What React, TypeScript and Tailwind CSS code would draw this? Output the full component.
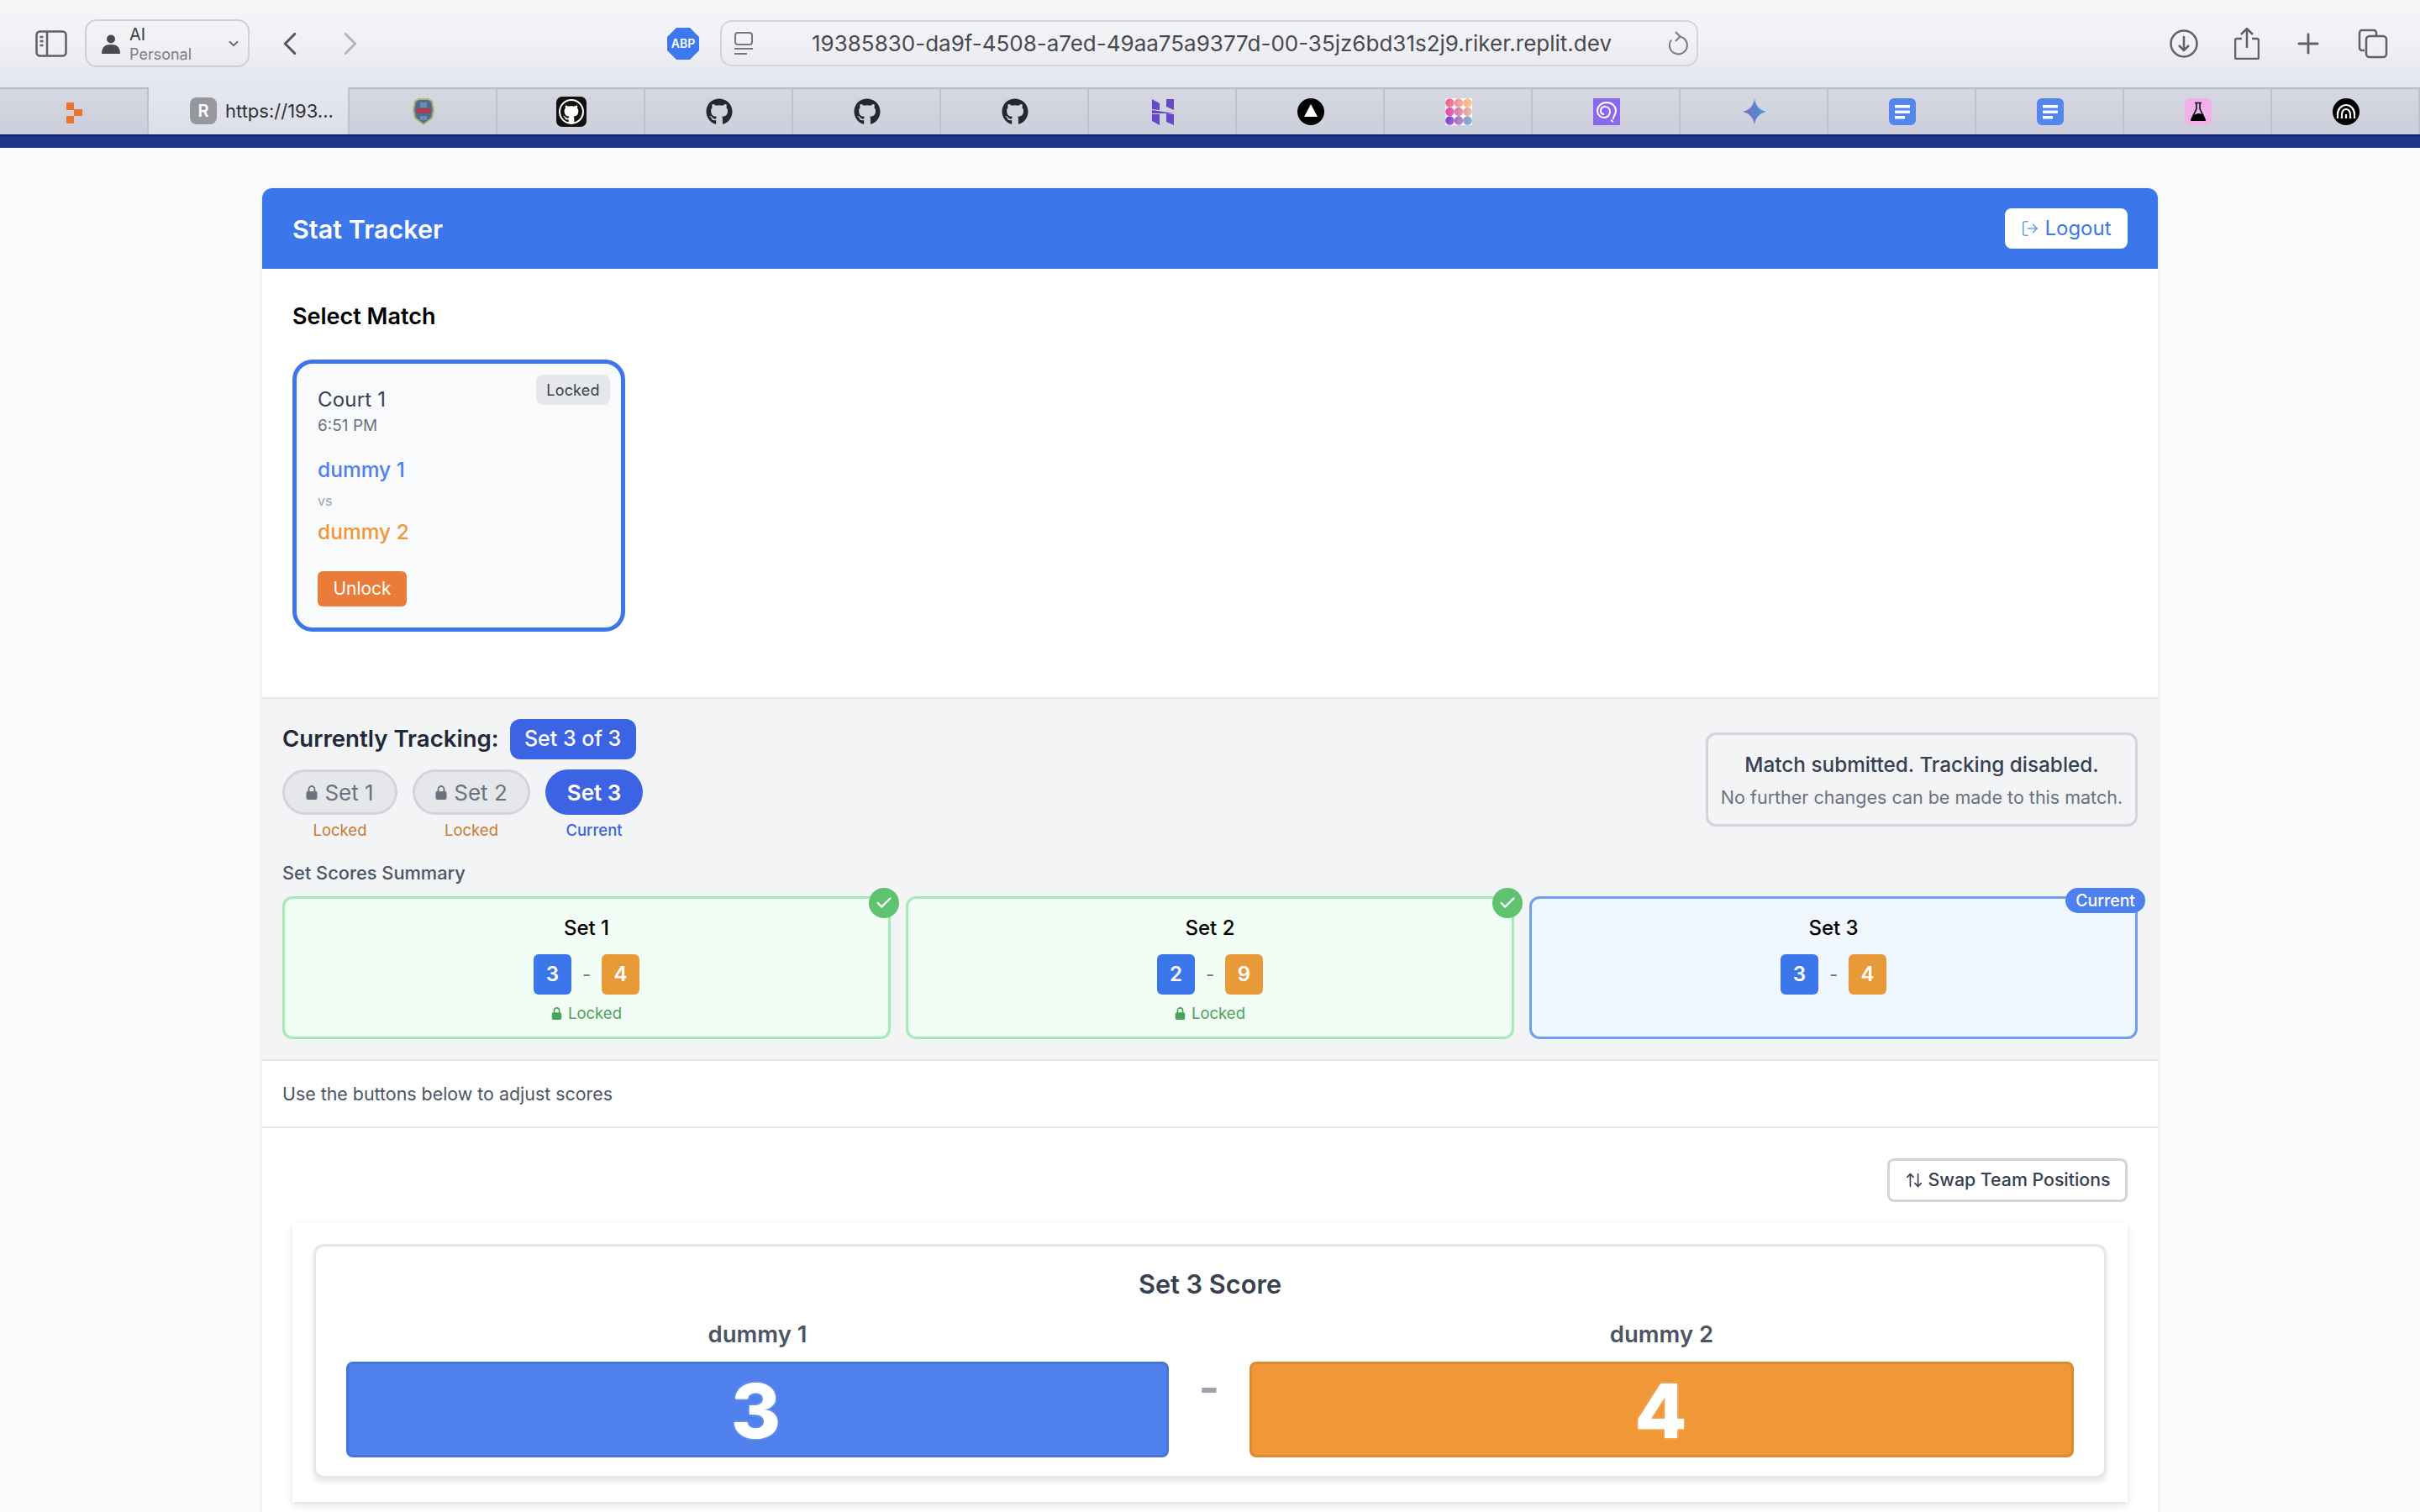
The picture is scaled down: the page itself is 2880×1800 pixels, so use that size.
import React from 'react';
import { FaGithub } from 'react-icons/fa6';
import { VscGithubInverted } from 'react-icons/vsc';
import { LogOut, ArrowUpDown, Check, ChevronDown, ChevronLeft, ChevronRight, Plus } from 'lucide-react';

const font = "font-['Inter','Liberation_Sans',sans-serif]";

const Tab: React.FC<{ children: React.ReactNode }> = ({ children }) => (
  <div className="w-[176px] h-full shrink-0 flex items-center justify-center pl-[2px] border-r-2 border-[#bfc2cd]">{children}</div>
);

const LockIcon: React.FC<{ w: number; h: number; color: string }> = ({ w, h, color }) => (
  <svg width={w} height={h} viewBox="0 0 14 17" className="shrink-0">
    <path d="M3.500 8V4.500a3.500 3.500 0 017 0V8" fill="none" stroke={color} strokeWidth="1.800" />
    <rect x="0.500" y="7" width="13" height="10" rx="2" fill={color} />
  </svg>
);

const ReplitIcon = () => (
  <svg width="32" height="32" viewBox="0 0 32 32">
    <path d="M6 5h9v9H6zM15 13h10v8H15zM6 21h9v9H6z" fill="#ea7530" />
  </svg>
);

const ShieldIcon = () => (
  <svg width="32" height="32" viewBox="0 0 32 32">
    <path d="M5 3l5-3h12l5 3 2 11-2 10-11 8-11-8-2-10z" fill="#b8b36a" />
    <path d="M7 4l4-2h10l4 2 2 10-2 9-9 7-9-7-2-9z" fill="#4b6f96" />
    <path d="M12 5h8v6h-8zM12 21h8v5h-8z" fill="#6f8cab" />
    <rect x="8" y="12" width="16" height="6" fill="#b3394a" />
  </svg>
);

const HostingerIcon = () => (
  <svg width="32" height="32" viewBox="0 0 32 32">
    <path d="M3 1l9 5v8l-9-1zM20 1l9 0v13l-9-4zM3 19h9l0 13-9-5zM20 18l9 1v13l-9-4zM3 14l26 4-26 0z" fill="#6748c8" />
  </svg>
);

const TriangleIcon = () => (
  <svg width="32" height="32" viewBox="0 0 32 32">
    <circle cx="16" cy="16" r="16" fill="#000" />
    <path d="M16 7l8 15H8z" fill="#fff" />
  </svg>
);

const MosaicIcon = () => (
  <svg width="32" height="32" viewBox="0 0 32 32">
    <defs>
      <linearGradient id="mos" gradientUnits="userSpaceOnUse" x1="0" y1="0" x2="32" y2="12">
        <stop offset="0" stopColor="#ee4f8e" />
        <stop offset="0.5" stopColor="#eda5a0" />
        <stop offset="1" stopColor="#f6cf7c" />
      </linearGradient>
      <linearGradient id="mos2" gradientUnits="userSpaceOnUse" x1="0" y1="11" x2="32" y2="21">
        <stop offset="0" stopColor="#e23fb0" />
        <stop offset="0.5" stopColor="#d88cb0" />
        <stop offset="1" stopColor="#ecc7a0" />
      </linearGradient>
      <linearGradient id="mos3" gradientUnits="userSpaceOnUse" x1="0" y1="21" x2="32" y2="32">
        <stop offset="0" stopColor="#6d32d8" />
        <stop offset="0.5" stopColor="#b880c0" />
        <stop offset="1" stopColor="#73bfd0" />
      </linearGradient>
    </defs>
    <rect width="32" height="32" fill="#fff" />
    <g fill="url(#mos)">
      <circle cx="5.500" cy="5.500" r="5.300" />
      <circle cx="16" cy="5.500" r="5.300" />
      <circle cx="26.500" cy="5.500" r="5.300" />
    </g>
    <g fill="url(#mos2)">
      <circle cx="5.500" cy="16" r="5.300" />
      <circle cx="16" cy="16" r="5.300" />
      <circle cx="26.500" cy="16" r="5.300" />
    </g>
    <g fill="url(#mos3)">
      <circle cx="5.500" cy="26.500" r="5.300" />
      <circle cx="16" cy="26.500" r="5.300" />
      <circle cx="26.500" cy="26.500" r="5.300" />
    </g>
  </svg>
);

const BrainIcon = () => (
  <svg width="32" height="32" viewBox="0 0 32 32">
    <rect width="32" height="32" fill="#8b67f0" />
    <path d="M24 25c-1-3 3-5 3-10 0-6-5-10-11-10S5 9 5 15c0 5 4 8 8 8s7-3 7-7-3-6-6-6-5 2-5 5 2 4 4 4M21 26l3 2" fill="none" stroke="#fff" strokeWidth="2" />
  </svg>
);

const GeminiIcon = () => (
  <svg width="32" height="32" viewBox="0 0 32 32">
    <defs>
      <linearGradient id="gem" x1="0" y1="0" x2="1" y2="0">
        <stop offset="0" stopColor="#9168c0" />
        <stop offset="0.6" stopColor="#5684d1" />
        <stop offset="1" stopColor="#4fa0e0" />
      </linearGradient>
    </defs>
    <path d="M16 0c1 9 6 14 14 16-8 2-13 7-14 16-1-9-6-14-14-16 8-2 13-7 14-16z" fill="url(#gem)" />
  </svg>
);

const DocsIcon = () => (
  <svg width="32" height="32" viewBox="0 0 32 32">
    <rect width="32" height="32" rx="6" fill="#5385ee" />
    <path d="M7 8h18v3.500H7zM7 14.500h18V18H7zM7 21h12v3.500H7z" fill="#fff" />
  </svg>
);

const FlaskIcon = () => (
  <svg width="32" height="32" viewBox="0 0 32 32">
    <rect width="32" height="32" rx="7" fill="#f0b0e8" />
    <path d="M12 5.500h8M14 5.500v7L8 25h16l-6-12.500v-7" fill="none" stroke="#000" strokeWidth="1.500" />
    <path d="M10 20l6-2 6 1 3 8H7z" fill="#000" />
  </svg>
);

const ArcsIcon = () => (
  <svg width="32" height="32" viewBox="0 0 32 32">
    <circle cx="16" cy="16" r="16" fill="#000" />
    <path d="M6 24v-5a10 11 0 0120 0v5M11 24v-5a5 6 0 0110 0v5M16 24v-5" fill="none" stroke="#fff" strokeWidth="2.200" />
  </svg>
);

const GithubRing = () => <FaGithub className="w-[32px] h-[32px] text-[#24292f]" />;

const SummaryCard: React.FC<{ title: string; a: number; b: number; current?: boolean }> = ({ title, a, b, current }) => (
  <div className={`relative h-[170px] rounded-[12px] border-[3px] flex flex-col items-center pt-[19px] ${current ? 'bg-[#f0f7ff] border-[#6f9ff3]' : 'bg-[#f2fdf5] border-[#a1ebb8]'}`}>
    {current ? (
      <span className="absolute -top-[13px] -right-[12px] h-[30px] px-[12px] rounded-full bg-[#4f80f0] text-white text-[19.500px] leading-[30px] font-medium">Current</span>
    ) : (
      <span className="absolute -top-[13px] -right-[13px] w-[36px] h-[36px] rounded-full bg-[#5ec26f] text-white flex items-center justify-center">
        <Check size={22} strokeWidth={2.5} />
      </span>
    )}
    <div className="text-[24px] leading-[32px] font-medium text-black">{title}</div>
    <div className="flex items-center gap-[12px] mt-[15px]">
      <span className="w-[45px] h-[48px] rounded-[6px] bg-[#3b76ea] text-white text-[24px] font-semibold flex items-center justify-center">{a}</span>
      <span className="w-[12px] text-center text-[22px] text-[#6b7280]">-</span>
      <span className="w-[45px] h-[48px] rounded-[6px] bg-[#e89a38] text-white text-[24px] font-semibold flex items-center justify-center">{b}</span>
    </div>
    {!current && (
      <div className="flex items-center gap-[7px] mt-[8px] text-[18.500px] leading-[28px] text-[#4aa35a]">
        <LockIcon w={13} h={15} color="#4aa35a" />
        <span>Locked</span>
      </div>
    )}
  </div>
);

const SetPill: React.FC<{ label: string; status: string; w: string; current?: boolean }> = ({ label, status, w, current }) => (
  <div className={`${w} flex flex-col items-center`}>
    <div className={`w-full h-[54px] rounded-full flex items-center justify-center gap-[8px] text-[26px] ${current ? 'bg-[#3b63e3] text-white font-semibold' : 'bg-[#e5e7eb] border-[3px] border-[#d1d5db] text-[#6b7280]'}`}>
      {!current && <LockIcon w={14} h={17} color="#6b7280" />}
      {label}
    </div>
    <div className={`mt-[4px] text-[18.500px] leading-[28px] ${current ? 'text-[#3b63e3] font-medium' : 'text-[#c97a2e]'}`}>{status}</div>
  </div>
);

const App: React.FC = () => {
  return (
    <div className={`${font} w-[2880px] h-[1800px] overflow-hidden bg-[#f9fafb] flex flex-col`}>
      {/* browser toolbar */}
      <div className="h-[104px] shrink-0 bg-gradient-to-b from-[#f5f6f8] via-[#f0f1f5] to-[#e3e5ee] flex items-center pb-[1px]">
        <svg className="ml-[42px] shrink-0" width="38" height="32" viewBox="0 0 38 32" fill="none" stroke="#5f6064" strokeWidth="2.500">
          <rect x="1.500" y="1.500" width="35" height="29" rx="4" />
          <path d="M14 1.500v29M5.500 8h4M5.500 13h4M5.500 18h4" />
        </svg>
        <div className="ml-[21px] w-[196px] h-[57px] shrink-0 rounded-[14px] border-[2px] border-[#cfd0d4] flex items-center pl-[17px] pr-[8px]">
          <svg width="24" height="24" viewBox="0 0 24 24" fill="#4a4a4e">
            <circle cx="12" cy="6.500" r="5" />
            <path d="M1 24c0-8 4-11 11-11s11 3 11 11z" />
          </svg>
          <div className="ml-[10px] flex-1 text-[#3c3c40]">
            <div className="text-[20px] leading-[24px] mt-[2px]">AI</div>
            <div className="text-[18px] leading-[24px] text-[#7b7c80]">Personal</div>
          </div>
          <ChevronDown size={18} strokeWidth={2.5} className="text-[#6b6c70]" />
        </div>
        <ChevronLeft size={46} strokeWidth={1.600} className="ml-[25px] shrink-0 text-[#55565a]" />
        <ChevronRight size={46} strokeWidth={1.600} className="ml-[26px] shrink-0 text-[#b4b5b9]" />
        <svg className="ml-[354px] shrink-0" width="38" height="38" viewBox="0 0 38 38">
          <path d="M11 0h16l11 11v16L27 38H11L0 27V11z" fill="#3d78ef" />
          <text x="19" y="24" textAnchor="middle" fill="#fff" fontSize="14" fontWeight="600" fontFamily="Inter">ABP</text>
        </svg>
        <div className="ml-[25px] w-[1164px] h-[55px] shrink-0 rounded-[14px] border-[2px] border-[#d4d5d9] flex items-center pl-[14px] pr-[10px]">
          <svg className="shrink-0" width="24" height="28" viewBox="0 0 24 28" fill="none" stroke="#77787c" strokeWidth="2">
            <rect x="2" y="1" width="20" height="14" rx="3" />
            <path d="M1 20h22M1 26h15" />
          </svg>
          <div className="ml-[69px] flex-1 text-[26px] text-[#48494d] whitespace-nowrap">19385830-da9f-4508-a7ed-49aa75a9377d-00-35jz6bd31s2j9.riker.replit.dev</div>
          <svg className="shrink-0" width="24" height="30" viewBox="0 0 24 30" fill="none" stroke="#77787c" strokeWidth="2">
            <path d="M14 6.500a10.500 10.500 0 11-10 4" />
            <path d="M9 1l5.500 5.500L9 12" />
          </svg>
        </div>
        <svg className="ml-[561px] shrink-0" width="34" height="34" viewBox="0 0 34 34" fill="none" stroke="#606165" strokeWidth="2.500">
          <circle cx="17" cy="17" r="15.500" />
          <path d="M17 8v17M11 19l6 6 6-6" />
        </svg>
        <svg className="ml-[43px] shrink-0" width="30" height="38" viewBox="0 0 30 38" fill="none" stroke="#606165" strokeWidth="2.500">
          <path d="M9 13H3a2 2 0 00-2 2v20a2 2 0 002 2h24a2 2 0 002-2V15a2 2 0 00-2-2h-6M15 24V2M8 8l7-7 7 7" />
        </svg>
        <Plus size={38} strokeWidth={1.800} className="ml-[39px] shrink-0 text-[#606165]" />
        <svg className="ml-[40px] shrink-0" width="36" height="36" viewBox="0 0 36 36" fill="none" stroke="#606165" strokeWidth="2.500">
          <path d="M8 26H5a3 3 0 01-3-3V5a3 3 0 013-3h14a3 3 0 013 3v3" />
          <rect x="10" y="9" width="24" height="25" rx="4" />
        </svg>
      </div>

      {/* tab strip */}
      <div className="h-[56px] shrink-0 border-t-2 border-[#b8bac5] bg-gradient-to-b from-[#d5d8e2] to-[#cccfdb] flex items-stretch">
        <div className="w-[177px] shrink-0 flex items-center justify-center pl-[2px] border-r-2 border-[#bfc2cd]"><ReplitIcon /></div>
        <div className="w-[239px] shrink-0 -mt-[2px] bg-gradient-to-b from-[#e6e8f0] to-[#dcdfe9] flex items-center pl-[49px] border-r-2 border-[#bfc2cd]">
          <span className="w-[32px] h-[32px] rounded-[8px] bg-[#96979f] text-white text-[20px] font-semibold flex items-center justify-center">R</span>
          <span className="ml-[10px] text-[22px] text-[#303135]">https://193...</span>
        </div>
        <Tab><ShieldIcon /></Tab>
        <Tab>
          <span className="w-[36px] h-[36px] rounded-[7px] bg-[#111] flex items-center justify-center">
            <span className="w-[30px] h-[30px] rounded-full bg-white flex items-center justify-center">
              <VscGithubInverted className="w-[26px] h-[26px] text-[#111]" />
            </span>
          </span>
        </Tab>
        <Tab><GithubRing /></Tab>
        <Tab><GithubRing /></Tab>
        <Tab><GithubRing /></Tab>
        <Tab><HostingerIcon /></Tab>
        <Tab><TriangleIcon /></Tab>
        <Tab><MosaicIcon /></Tab>
        <Tab><BrainIcon /></Tab>
        <Tab><GeminiIcon /></Tab>
        <Tab><DocsIcon /></Tab>
        <Tab><DocsIcon /></Tab>
        <Tab><FlaskIcon /></Tab>
        <Tab><ArcsIcon /></Tab>
      </div>
      <div className="h-[16px] shrink-0 bg-[#1f3688] border-t-2 border-[#0c1c70]" />

      {/* page */}
      <div className="px-[312px] pt-[48px]">
        <div className="bg-white rounded-t-[12px] shadow-[0_1px_6px_rgba(0,0,0,0.08)]">
          <div className="h-[96px] rounded-t-[12px] bg-[#3b76ea] flex items-center justify-between px-[36px]">
            <h1 className="text-[30.500px] pt-[2px] font-semibold text-white">Stat Tracker</h1>
            <button className="w-[146px] h-[48px] rounded-[8px] bg-white text-[#3b76ea] text-[24px] flex items-center justify-center gap-[6px]">
              <LogOut size={22} strokeWidth={1.800} className="text-[#6f9ff3]" />
              Logout
            </button>
          </div>

          {/* match list */}
          <div className="h-[512px] border-b-2 border-[#e5e7eb] px-[36px] pt-[38px]">
            <h2 className="text-[27px] leading-[38px] font-semibold text-black">Select Match</h2>
            <div className="relative mt-[32px] w-[396px] h-[324px] rounded-[24px] border-[5px] border-[#3b76ea] bg-[#f9fafb] pl-[25px] pt-[27px]">
              <span className="absolute top-[13px] right-[13px] w-[88px] h-[36px] rounded-[8px] bg-[#e5e7eb] text-[#374151] text-[18px] tracking-[0.2px] flex items-center justify-center">Locked</span>
              <div className="text-[24px] leading-[32px] tracking-[0.2px] text-[#374151]">Court 1</div>
              <div className="mt-[2px] text-[19px] leading-[26px] text-[#6b7280]">6:51 PM</div>
              <div className="mt-[22px] text-[24.500px] leading-[34px] font-medium text-[#4f80ec]">dummy 1</div>
              <div className="mt-[8px] text-[16px] leading-[24px] text-[#9ca3af]">vs</div>
              <div className="mt-[8px] text-[24.500px] leading-[34px] font-medium text-[#f0963a]">dummy 2</div>
              <button className="mt-[30px] w-[106px] h-[42px] rounded-[6px] bg-[#e97c38] text-white text-[21px] flex items-center justify-center">Unlock</button>
            </div>
          </div>

          {/* tracking */}
          <div className="h-[431px] bg-[#f3f4f6] border-b-2 border-[#e5e7eb] px-[24px] pt-[24px]">
            <div className="flex justify-between items-start">
              <div>
                <div className="flex items-center gap-[13px]">
                  <span className="text-[27.600px] font-semibold text-[#1f2937]">Currently Tracking:</span>
                  <span className="w-[150px] h-[48px] rounded-[12px] bg-[#3b63e3] text-white text-[25px] font-medium flex items-center justify-center">Set 3 of 3</span>
                </div>
                <div className="flex gap-[18px] mt-[12px]">
                  <SetPill label="Set 1" status="Locked" w="w-[137px]" />
                  <SetPill label="Set 2" status="Locked" w="w-[140px]" />
                  <SetPill label="Set 3" status="Current" w="w-[116px]" current />
                </div>
              </div>
              <div className="mt-[16px] w-[514px] h-[112px] rounded-[12px] border-[3px] border-[#d1d5db] flex flex-col items-center justify-center">
                <div className="text-[24.300px] leading-[36px] font-medium text-[#374151]">Match submitted. Tracking disabled.</div>
                <div className="mt-[6px] text-[21.500px] leading-[30px] text-[#6b7280]">No further changes can be made to this match.</div>
              </div>
            </div>
            <div className="mt-[22px] text-[21.800px] leading-[30px] font-medium text-[#4b5563]">Set Scores Summary</div>
            <div className="grid grid-cols-3 gap-[18px] mt-[13px]">
              <SummaryCard title="Set 1" a={3} b={4} />
              <SummaryCard title="Set 2" a={2} b={9} />
              <SummaryCard title="Set 3" a={3} b={4} current />
            </div>
          </div>

          {/* hint */}
          <div className="h-[80px] border-b-2 border-[#e5e7eb] px-[24px] flex items-center text-[21.400px] text-[#4b5563]">Use the buttons below to adjust scores</div>

          {/* score board */}
          <div className="px-[36px] pt-[36px] pb-[48px]">
            <div className="flex justify-end">
              <button className="w-[286px] h-[52px] rounded-[8px] border-[3px] border-[#d1d5db] bg-white text-[#374151] text-[21.300px] font-medium flex items-center justify-center gap-[6px]">
                <ArrowUpDown size={22} strokeWidth={1.800} />
                Swap Team Positions
              </button>
            </div>
            <div className="mt-[25px] shadow-[0_4px_8px_rgba(0,0,0,0.12)] px-[25px] pt-[25px] pb-[28px]">
              <div className="h-[279px] rounded-[12px] border-[3px] border-[#e5e7eb] shadow-[0_4px_6px_rgba(0,0,0,0.1)] px-[36px] pt-[24px]">
                <div className="text-center text-[30.700px] leading-[42px] font-semibold text-[#374151]">Set 3 Score</div>
                <div className="grid grid-cols-[979px_1fr_981px] mt-[19px]">
                  <div className="text-center text-[27.500px] leading-[38px] font-semibold text-[#4b5563]">dummy 1</div>
                  <div />
                  <div className="text-center text-[27.500px] leading-[38px] font-semibold text-[#4b5563]">dummy 2</div>
                </div>
                <div className="grid grid-cols-[979px_1fr_981px] mt-[14px]">
                  <div className="h-[114px] rounded-[8px] bg-[#4f80ec] border-[3px] border-[#4474d6] flex items-center justify-center pt-[2px] pr-[4px] text-white text-[90px] font-extrabold [text-shadow:0_0_3px_rgba(255,255,255,0.5)]">3</div>
                  <div className="flex justify-center pt-[6px] text-[52px] leading-[52px] font-bold text-[#9ca3af]">-</div>
                  <div className="h-[114px] rounded-[8px] bg-[#f09838] border-[3px] border-[#dc8a30] flex items-center justify-center pt-[2px] pr-[2px] text-white text-[90px] font-extrabold [text-shadow:0_0_3px_rgba(255,255,255,0.5)]">4</div>
                </div>
              </div>
            </div>
          </div>
        </div>
      </div>
    </div>
  );
};

export default App;
